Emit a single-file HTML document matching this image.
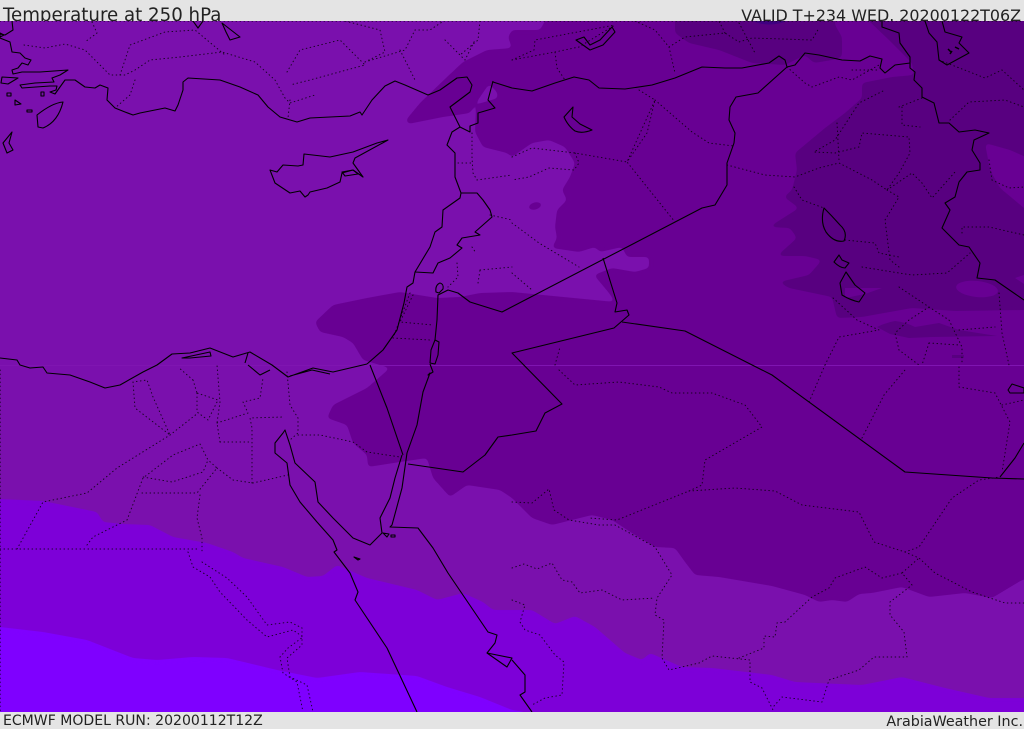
<!DOCTYPE html>
<html><head><meta charset="utf-8"><title>Temperature at 250 hPa</title>
<style>
html,body{margin:0;padding:0;width:1024px;height:729px;overflow:hidden;background:#e4e4e4}
svg{display:block;position:absolute;left:0;top:0}
text{font-family:"DejaVu Sans","Liberation Sans",sans-serif;fill:#222}
.c{fill:none;stroke:#000;stroke-width:1.1;stroke-linejoin:round}
.d{fill:none;stroke:#000;stroke-width:1;stroke-dasharray:.6 3.4;stroke-linecap:round;stroke-linejoin:round;opacity:.8}
</style></head><body>
<svg width="1024" height="729" viewBox="0 0 1024 729">
<defs><clipPath id="m"><rect x="0" y="21" width="1024" height="691"/></clipPath>
<filter id="s" filterUnits="userSpaceOnUse" x="-40" y="-20" width="1110" height="770" color-interpolation-filters="sRGB">
<feGaussianBlur stdDeviation="2"/>
<feComponentTransfer><feFuncA type="linear" slope="10" intercept="-4.5"/></feComponentTransfer>
</filter></defs>
<rect width="1024" height="729" fill="#e4e4e4"/>
<text x="3" y="21" font-size="18.2">Temperature at 250 hPa</text>
<text x="1021" y="21" font-size="15.9" text-anchor="end">VALID T+234 WED. 20200122T06Z</text>
<text x="3" y="725" font-size="14.05">ECMWF MODEL RUN: 20200112T12Z</text>
<text x="1023" y="726" font-size="14.3" text-anchor="end">ArabiaWeather Inc.</text>
<g clip-path="url(#m)">
<rect x="0" y="21" width="1024" height="691" fill="#7a10ad"/>
<path filter="url(#s)" fill="#7d00d8" d="M-20 499L0 499L43 501L97 512L103 522L123 524L150 525L173 537L207 543L233 552L243 558L283 567L307 577L323 576L337 565L367 578L417 590L437 600L463 593L483 602L493 610L512 610L532 610L555 624L575 616L595 627L625 653L642 660L650 653L682 667L712 668L772 675L795 682L862 685L902 677L945 688L989 698L1024 698L1044 698V730H-20Z"/>
<path filter="url(#s)" fill="#7f00ff" d="M-20 627L0 627L43 632L87 640L133 658L157 660L193 657L227 658L277 670L317 678L360 672L417 676L447 687L480 697L512 710L525 712L535 730H-20Z"/>
<path filter="url(#s)" fill="#680093" d="M548 0L545 21L540 30L512 30L508 37L512 48L487 50L463 62L447 77L420 103L406 120L408 124L443 117L457 115L470 113L478 100L489 84L497 92L498 98L478 104L476 108L475 132L483 147L507 153L512 157L532 143L549 140L565 147L575 163L570 177L562 190L567 200L557 210L555 227L557 238L552 248L579 252L595 247L600 252L622 247L627 257L649 257L649 268L635 272L612 268L594 275L609 293L615 302L512 292L480 293L460 297L437 298L400 292L367 298L333 305L315 322L320 332L343 337L353 343L363 360L390 368L367 388L333 405L327 418L347 425L353 443L367 455L368 467L400 462L427 458L433 478L450 497L467 485L500 490L512 498L532 518L552 525L592 515L612 520L635 535L655 547L675 548L685 562L695 575L719 577L772 586L805 595L819 602L832 600L847 602L859 594L872 593L902 587L929 597L965 593L992 598L1022 580L1044 575V0Z"/>
<ellipse cx="535" cy="206" rx="6" ry="3.5" fill="#680093" transform="rotate(-15 535 206)"/>
<path filter="url(#s)" fill="#580080" d="M675 0L675 33L689 43L719 50L752 63L785 65L805 55L814 63L832 60L842 57L842 37L835 25L835 0Z"/>
<path fill="#3f0080" d="M752 21Q770 28 787 21Z"/>
<path filter="url(#s)" fill="#580080" d="M855 0L869 21L889 40L912 63L914 75L892 77L862 83L862 98L845 113L825 128L795 153L797 170L792 190L784 197L799 208L769 227L790 228L797 238L777 256L805 256L822 260L809 275L779 282L789 288L832 297L837 318L862 317L912 308L955 311L1024 310L1044 310V0Z"/>
<path filter="url(#s)" fill="#680093" d="M985 143L1010 150L1044 165V225L1024 208L1000 188L990 170Z"/>
<ellipse cx="977" cy="289" rx="21" ry="8" fill="#680093" transform="rotate(6 977 289)"/>
<path fill="#680093" d="M1024 275L1015 278L1024 284Z"/>
<path fill="#680093" d="M845 288L882 288L865 294L845 298Z"/>
<path fill="#580080" d="M877 327Q885 323 895 321Q905 322 915 327L939 323L959 330L997 336L932 337L909 338L890 334Z"/>
<path fill="#580080" d="M952 355L964 355L964 358L952 358Z"/>
<rect x="0" y="365" width="1024" height="1" fill="#7a10ad"/>
<rect x="0" y="365" width="1024" height="1" fill="#8a20bd" opacity=".3"/>

<path class="d" style="opacity:.5" d="M0 21.5H1024M0.5 370V712"/>
<path class="d" d="M24 45L45 48L65 44L85 50L110 75L125 75L135 70L150 60L180 57L222 52L255 62L275 80L285 98L290 103L315 95M120 75L130 45L165 32L195 30L225 55M92 22L97 33L85 42M135 80L130 95L115 108M290 100L288 118M287 72L300 50L340 40L360 60L365 65L310 80L290 85M365 62L405 50L415 30L430 30L445 20M365 62L385 52L380 30L345 21M400 50L415 80M445 40L465 60L475 40M480 21L478 40L460 55"/>
<path class="d" d="M472 133L472 157L473 173L477 180L512 175M458 163L473 163M472 247L476 253M457 263L458 277L448 287M480 270L512 267M478 283L480 270M490 215L512 220M410 293L393 338L430 340M413 295L400 322L433 325"/>
<path class="d" d="M512 157L532 148L575 153L627 162L655 100L647 133L627 162L675 222M655 100L692 132L709 143L734 146M639 90L655 100M575 153L579 163L574 170L549 168L529 177L512 180M512 223L539 243L579 267M512 273L532 290M512 60L534 50L535 40L615 25M512 60L555 52L557 68L565 80M555 52L579 47L615 25M635 21L655 30L669 47L675 73M669 47L685 37L725 33L739 42L752 38L812 40L819 28M725 33L719 21M739 23L755 53"/>
<path class="d" d="M787 67L805 83L812 87L839 77L852 80L879 65M852 70L879 70M727 165L765 175L795 177L819 168L839 163L872 180L887 190L899 173L910 153L909 137L862 133L859 147L835 153L814 152L835 140L859 103L885 90M837 123L839 160M899 107L922 98M902 107L902 125L920 127M887 190L899 197L885 220L890 260L899 267M887 190L912 173L922 183L932 198L955 172M794 187L802 200L824 208M845 240L875 243L879 253L899 257M862 267L899 273L912 275L947 273L970 253M962 233L962 227L989 227L1024 235M950 120L969 102L1005 100L1024 107M939 60L985 78L1002 70L1024 90M989 160L992 180L1009 188L1024 187"/>
<path class="d" d="M899 287L929 307L909 320L895 333L899 350L919 365M929 307L949 320L962 347L962 363M929 343L922 365M929 343L959 345M999 293L1002 333L1009 365M825 365L839 337L879 330L857 320L832 297M959 330L995 327M555 365L560 347"/>
<path class="d" d="M559 370L575 385L619 382L659 387L672 393L712 393L745 405L762 427L705 460L702 485L689 491L617 520L589 518M512 502L532 503L549 489L554 510L569 520L599 525L615 525L655 547L672 575L657 598L655 615L664 620L662 658L669 670L699 663L712 656L750 660L750 682L762 688L774 712M774 706L782 697L822 702L829 680L859 670L874 657L907 657L904 632L890 615L890 602L912 585L902 573L919 558M739 658L764 648L764 636L775 637L777 623L785 622L812 597L829 588L835 578L865 567L882 578L902 573M689 491L735 488L775 491L802 505L859 512L874 542L905 552L919 558L935 573L972 592L1005 603L1024 603M905 552L919 547L952 498L979 480L1000 477M809 402L825 365M862 438L884 395L905 370M959 367L959 387L995 393L1010 422L1002 472M1002 405L1024 400M512 568L524 564L537 569L552 563L562 580L572 582L580 593L602 590L622 600L655 598M512 600L525 605L520 622L525 630L540 635L555 655L564 662L562 695L545 698L532 705"/>
<path class="d" d="M0 549H200M17 549L43 502L87 493L117 468L170 435L198 413M133 382L135 408L170 435L153 397L147 380L133 382M87 545L93 537L127 520L143 478L173 455L200 444L208 460L203 472L172 482L143 477M142 493L197 493L217 468L208 460M217 468L233 480L253 483L288 475M252 483L252 428L250 418L283 417M220 442L252 442M220 442L217 423L220 402L217 365M217 423L248 413L243 402L260 398L263 378M197 393L197 412L208 420L218 400L197 393M193 380L178 367M193 380L197 393M287 372L290 405L298 418L298 433L290 440M298 435L320 435L353 442L367 452L400 457M200 495L197 518L202 538L202 553M188 552L193 567L210 577L220 592L247 620L267 637L293 630L303 637L288 648L280 657L283 673L297 682L303 712M202 562L227 578L247 597L267 625L290 622L302 628L302 645L287 658L290 677L307 685L313 712"/>

<path class="c" d="M12 21L13 30L5 35L0 34M0 38L10 42L12 52L20 53L25 58L31 60L28 65L22 63L18 68L12 70L13 74L22 72L40 72L68 70L60 75L52 78L54 82L35 83L20 85L22 88L50 86L57 86L56 90L50 92L55 94L65 80L75 80L85 87L95 88L100 85L108 88L107 100L115 108L125 112L133 115L140 113L165 108L175 111L178 105L183 90L183 82L188 78L220 80L240 87L258 95L268 107L280 117L297 122L310 118L350 116L360 112L362 115L372 100L385 86L395 81L405 85L428 95L440 90L457 78L467 77L472 85L470 92L450 107L458 123L460 127L452 132L447 145L455 153L455 177L461 193L460 198L443 210L442 227L435 232L430 247L415 272L413 283L407 287L404 303L397 330L383 350L367 364"/>
<path class="c" d="M493 81L488 100L495 108L478 113L478 123L470 126L470 132L460 127M493 82L512 88L532 91L555 83L574 77L589 80L599 88L625 89L652 85L675 78L702 67L725 68L742 68L769 63L779 56L785 60L787 67L795 65L805 53L819 55L842 60L860 61L870 56L882 59L880 68L885 73L895 65L910 63"/>
<path class="c" d="M882 21L882 27L899 33L900 43L910 57L910 68L915 72L914 80L922 88L922 97L934 103L939 123L949 123L959 132L975 130L989 133L974 140L972 150L980 163L980 170L967 172L959 182L955 197L945 203L950 210L942 228L959 245L969 247L980 263L977 278L995 280L1024 300"/>
<path class="c" d="M787 67L758 93L736 97L730 107L729 120L735 133L734 143L727 163L727 185L715 205L702 208L502 312L470 302L458 293L448 290L438 295L437 320L435 340M603 258L617 303L615 312L627 310L629 315L614 328L512 353L562 404L545 413L536 431L512 435L498 437L485 455L463 472L408 464M622 322L685 331L772 375L905 472L992 478L1024 479M1000 477L1015 458L1024 443"/>
<path class="c" d="M461 193L477 193L483 200L490 210L492 217L475 232L480 235L462 238L457 245L462 248L450 258L438 263L433 273L415 272"/>
<path class="c" d="M436 292Q435 285 440 283Q444 284 443 289L439 293ZM435 340L439 342L438 355L435 364L430 363L431 350Z"/>
<path class="c" d="M430 364L433 372L428 375L430 373L423 392L417 425L407 453L402 488L392 525L390 527L418 528L433 548L448 573L488 632L497 635L495 643L487 653L512 658L507 667L487 653M512 660L525 675L525 692L520 695L532 712"/>
<path class="c" d="M402 455L395 478L390 498L380 518L382 533L370 545L353 538L333 518L318 502L315 482L295 463L290 445L285 430L283 433L275 443L275 453L287 463L290 485L300 502L317 522L333 540L337 550L334 552L350 573L358 592L355 600L387 648L417 712M370 365L387 408L403 455"/>
<path class="c" d="M0 358L17 360L20 365L30 368L43 367L47 373L70 375L90 382L105 388L120 385L143 372L157 365L172 354L190 353L210 348L233 357L250 352L272 365L288 377L313 368L333 372L367 364M245 363L248 353M248 365L260 375L270 370M182 358L210 352L211 356L190 358ZM290 376L312 370L330 374"/>
<path class="c" d="M304 154L303 165L298 166L283 165L277 172L270 170L275 183L290 193L300 191L305 197L308 195L310 192L327 188L340 182L342 173L353 170L363 177L353 163L355 158L388 140L377 143L353 152L330 157Z"/>
<path class="c" d="M342 172L353 170L358 174L345 176Z"/>
<path class="c" d="M63 102Q52 103 37 115L38 127L43 128Q58 122 63 102ZM12 132L3 143L7 153L13 150L9 143ZM222 23L240 37L230 40L226 32ZM193 21L198 28L203 21M2 77L18 78L8 84L1 83ZM7 93h4v3h-4ZM15 100l6 4l-6 1ZM27 110h5v2h-5ZM41 92h3v4h-3ZM0 33l4 2l-4 2Z"/>
<path class="c" d="M573 107L564 117Q568 126 575 131Q582 134 592 130L580 124L572 117ZM576 40L584 37L590 45L600 40L612 27L615 32L603 45L590 50ZM824 208Q820 222 826 232Q834 243 844 241Q848 232 840 225Q832 216 824 208ZM839 255L834 262Q840 268 845 268L849 263L842 260ZM846 272L840 283L842 295Q850 300 859 302L865 293L855 285ZM925 21L929 33L937 42L939 60L947 65L969 53L959 43L962 37L945 32L942 21M383 533l6 1l-2 3ZM391 535h4v2h-4ZM354 557l6 2l-2 1ZM1008 390L1012 384L1024 388V393L1010 393Z"/>
<path d="M948 49l3 3M955 47l4 2M950 54l2-3" stroke="#000" stroke-width="1.5" fill="none"/>
</g>
</svg>
</body></html>
